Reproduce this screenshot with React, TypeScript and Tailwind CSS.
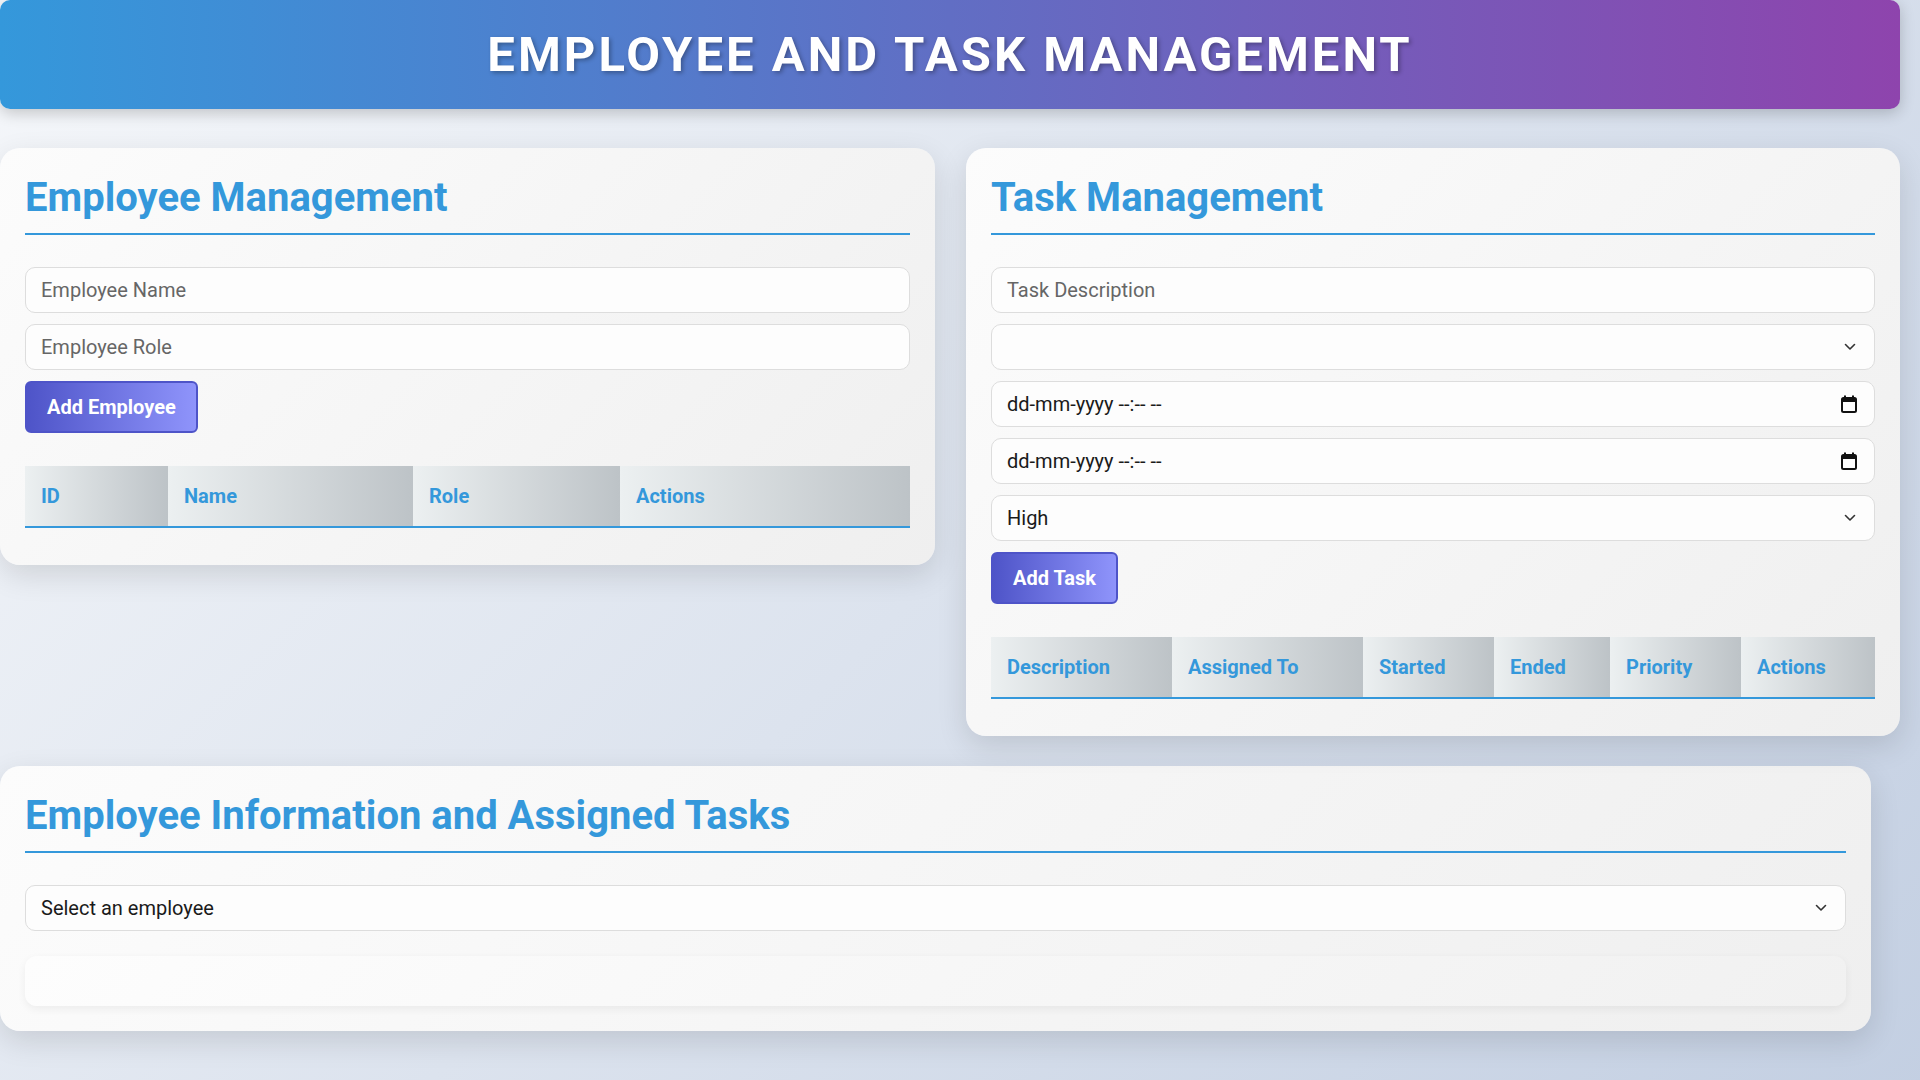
import React from "react";

const Chevron = () => (
  <svg width="12" height="8" viewBox="0 0 12 8" className="pointer-events-none absolute right-[19px] top-1/2 -translate-y-1/2">
    <path d="M1.5 1.5 6 6l4.5-4.5" fill="none" stroke="#333" strokeWidth="1.6" strokeLinecap="round" strokeLinejoin="round" />
  </svg>
);

const CalendarIcon = () => (
  <svg width="16" height="18" viewBox="0 0 16 18" className="absolute right-[17px] top-1/2 -translate-y-1/2">
    <rect x="1" y="3" width="14" height="14" rx="1.5" fill="none" stroke="#111" strokeWidth="2" />
    <rect x="1" y="3" width="14" height="4" fill="#111" />
    <rect x="3" y="0.5" width="2" height="3" fill="#111" />
    <rect x="11" y="0.5" width="2" height="3" fill="#111" />
  </svg>
);

const fieldCls =
  "h-[46px] w-full rounded-[10px] border border-[#dddddd] bg-[#fdfdfd] px-[15px] text-[20px] text-[#1a1a1a] outline-none placeholder:text-[#666]";

const TextField = ({ placeholder }: { placeholder: string }) => (
  <input className={`${fieldCls} mb-[11px] block`} placeholder={placeholder} />
);

const SelectField = ({ value, className = "mb-[11px]" }: { value: string; className?: string }) => (
  <div className={`relative ${className}`}>
    <select className={`${fieldCls} block appearance-none`} defaultValue={value}>
      <option value={value}>{value}</option>
    </select>
    <Chevron />
  </div>
);

const DateField = () => (
  <div className={`${fieldCls} relative mb-[11px] flex items-center`}>
    <span>dd-mm-yyyy --:-- --</span>
    <CalendarIcon />
  </div>
);

const Button = ({ label }: { label: string }) => (
  <button className="mb-[33px] h-[52px] rounded-[6px] border-2 border-[#4e54c8] bg-[linear-gradient(90deg,#4e54c8,#8f94fb)] px-[20px] text-[20px] font-bold text-white">
    {label}
  </button>
);

const HeadTable = ({ cols }: { cols: { label: string; w: string }[] }) => (
  <div className="mb-[12px] flex border-b-2 border-[#3498db]">
    {cols.map((c) => (
      <div
        key={c.label}
        className={`${c.w} flex h-[60px] items-center bg-[linear-gradient(90deg,#ecf0f1,#bdc3c7)] px-[16px] text-[20px] font-bold text-[#3498db]`}
      >
        {c.label}
      </div>
    ))}
  </div>
);

const Card = ({ title, className = "", children }: { title: string; className?: string; children: React.ReactNode }) => (
  <section
    className={`rounded-[20px] bg-[linear-gradient(135deg,#fcfcfc,#efefef)] px-[25px] pb-[25px] pt-[26px] shadow-[0_10px_30px_rgba(0,0,0,0.12)] ${className}`}
  >
    <h2 className="mb-[32px] border-b-2 border-[#3498db] pb-[12px] text-[40px] font-bold leading-[47px] text-[#3498db]">
      {title}
    </h2>
    {children}
  </section>
);

const App = () => {
  return (
    <div className="min-h-[1100px] w-[1920px] bg-[linear-gradient(135deg,#f5f7fa,#c3cfe2)] font-['Roboto','Liberation_Sans',sans-serif]">
      <header className="flex h-[109px] w-[1900px] items-center justify-center rounded-[10px] bg-[linear-gradient(90deg,#3498db,#8e44ad)] shadow-[0_4px_15px_rgba(0,0,0,0.2)]">
        <h1 className="text-[49px] font-bold tracking-[3px] text-white [text-shadow:2px_2px_4px_rgba(0,0,0,0.3)]">
          EMPLOYEE AND TASK MANAGEMENT
        </h1>
      </header>

      <div className="mt-[39px] grid w-[1900px] grid-cols-[935px_934px] items-start gap-[31px]">
        <Card title="Employee Management">
          <TextField placeholder="Employee Name" />
          <TextField placeholder="Employee Role" />
          <Button label="Add Employee" />
          <HeadTable
            cols={[
              { label: "ID", w: "w-[143px]" },
              { label: "Name", w: "w-[245px]" },
              { label: "Role", w: "w-[207px]" },
              { label: "Actions", w: "flex-1" },
            ]}
          />
        </Card>

        <Card title="Task Management">
          <TextField placeholder="Task Description" />
          <SelectField value="" />
          <DateField />
          <DateField />
          <SelectField value="High" />
          <Button label="Add Task" />
          <HeadTable
            cols={[
              { label: "Description", w: "w-[181px]" },
              { label: "Assigned To", w: "w-[191px]" },
              { label: "Started", w: "w-[131px]" },
              { label: "Ended", w: "w-[116px]" },
              { label: "Priority", w: "w-[131px]" },
              { label: "Actions", w: "flex-1" },
            ]}
          />
        </Card>
      </div>

      <Card title="Employee Information and Assigned Tasks" className="mt-[30px] w-[1871px]">
        <SelectField value="Select an employee" className="mb-[25px]" />
        <div className="h-[50px] rounded-[12px] bg-[linear-gradient(135deg,#fdfdfd,#f1f1f1)] shadow-[0_3px_8px_rgba(0,0,0,0.06)]" />
      </Card>
    </div>
  );
};

export default App;
